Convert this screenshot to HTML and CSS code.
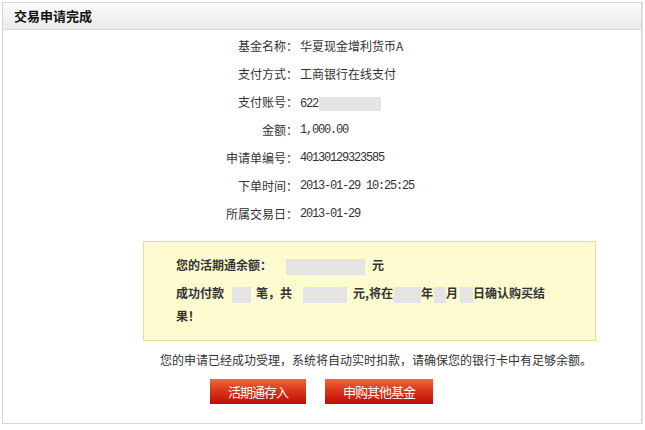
FILE: index.html
```html
<!DOCTYPE html>
<html lang="zh-CN">
<head>
  <meta charset="UTF-8" />
  <title>交易申请完成</title>
  <link rel="stylesheet" href="styles.css">
</head>
<body>

  <div class="panel">
    <div class="panel-hd">交易申请完成</div>

    <dl class="info">
      <dt>基金名称：</dt><dd>华夏现金增利货币A</dd>
      <dt>支付方式：</dt><dd>工商银行在线支付</dd>
      <dt>支付账号：</dt><dd><span class="num">622</span><span class="blank acct"></span></dd>
      <dt>金额：</dt><dd class="num">1,000.00</dd>
      <dt>申请单编号：</dt><dd class="num">40130129323585</dd>
      <dt>下单时间：</dt><dd class="num">2013-01-29 10:25:25</dd>
      <dt>所属交易日：</dt><dd class="num">2013-01-29</dd>
    </dl>

    <div class="notice">
      <div class="balance"><span>您的活期通余额：</span><span class="blank b-bal"></span><span class="unit">元</span></div>
      <div class="paid"><span>成功付款</span><span class="blank b-cnt"></span><span class="after">笔，共</span><span class="blank b-sum"></span><span class="after2">元,将在</span><span class="blank b-yr"></span><span>年</span><span class="blank b-mo"></span><span>月</span><span class="blank b-dy"></span><span>日确认购买结</span></div>
      <div class="paid-end">果！</div>
    </div>

    <p class="msg">您的申请已经成功受理，系统将自动实时扣款，请确保您的银行卡中有足够余额。</p>

    <div class="actions">
      <a class="btn" href="#">活期通存入</a>
      <a class="btn" href="#">申购其他基金</a>
    </div>
  </div>

</body>
</html>
```

FILE: styles.css
```css
body {
  margin: 0;
  padding: 2px 3px 0 2px;
  font-family: "Noto Sans CJK SC", "Liberation Sans", sans-serif;
  font-size: 12px;
  color: #333;
  background: #fff;
}

.panel {
  height: 420px;
  border: 1px solid #d6d6d6;
  box-shadow: 1px 0 0 #e4e4e4;
}

.panel-hd {
  height: 26px;
  line-height: 26px;
  padding-left: 11px;
  border-bottom: 1px solid #dcdcdc;
  background: linear-gradient(#fbfbfb, #f3f3f3 50%, #eaeaea);
  font-size: 13px;
  font-weight: bold;
  color: #111;
}

.info {
  display: grid;
  grid-template-columns: 295px 1fr;
  column-gap: 2px;
  margin: 0;
  padding-top: 2px;
}

.info dt,
.info dd {
  margin: 0;
  height: 28px;
  line-height: 28px;
}

.info dt {
  text-align: right;
}

.num {
  font-family: "Liberation Mono", monospace;
  font-size: 12px;
  letter-spacing: -1.2px;
}

.blank {
  display: inline-block;
  height: 16px;
  background: #e4e4e4;
  vertical-align: middle;
}

.acct {
  width: 62px;
  height: 14px;
  margin-left: 1px;
}

.notice {
  box-sizing: border-box;
  width: 453px;
  height: 100px;
  margin: 13px 0 0 140px;
  padding: 13px 35px 0 32px;
  background: #fffbd0;
  border: 1px solid #e6df9c;
  font-weight: bold;
  color: #333;
}

.balance {
  line-height: 20px;
  margin-bottom: 6px;
}

.paid,
.paid-end {
  line-height: 23px;
  white-space: nowrap;
}

.b-bal { width: 79px; margin-left: 14px; }
.unit { margin-left: 7px; }
.b-cnt { width: 19px; margin: 0 5px 0 8px; }
.after { margin-right: 11px; }
.b-sum { width: 44px; margin-right: 6px; }
.after2 { margin-right: 1px; }
.b-yr { width: 27px; }
.b-mo { width: 12px; margin-left: 1px; }
.b-dy { width: 13px; margin-left: 2px; }

.msg {
  margin: 9px 0 0 157px;
  line-height: 20px;
}

.actions {
  display: flex;
  gap: 19px;
  margin: 9px 0 0 207px;
}

.btn {
  display: block;
  height: 25px;
  line-height: 25px;
  padding: 0 18px;
  background: linear-gradient(#ec6b3e, #dc3d1c 40%, #c30a06);
  color: #fff;
  font-size: 13px;
  letter-spacing: -1px;
  text-decoration: none;
}
```
